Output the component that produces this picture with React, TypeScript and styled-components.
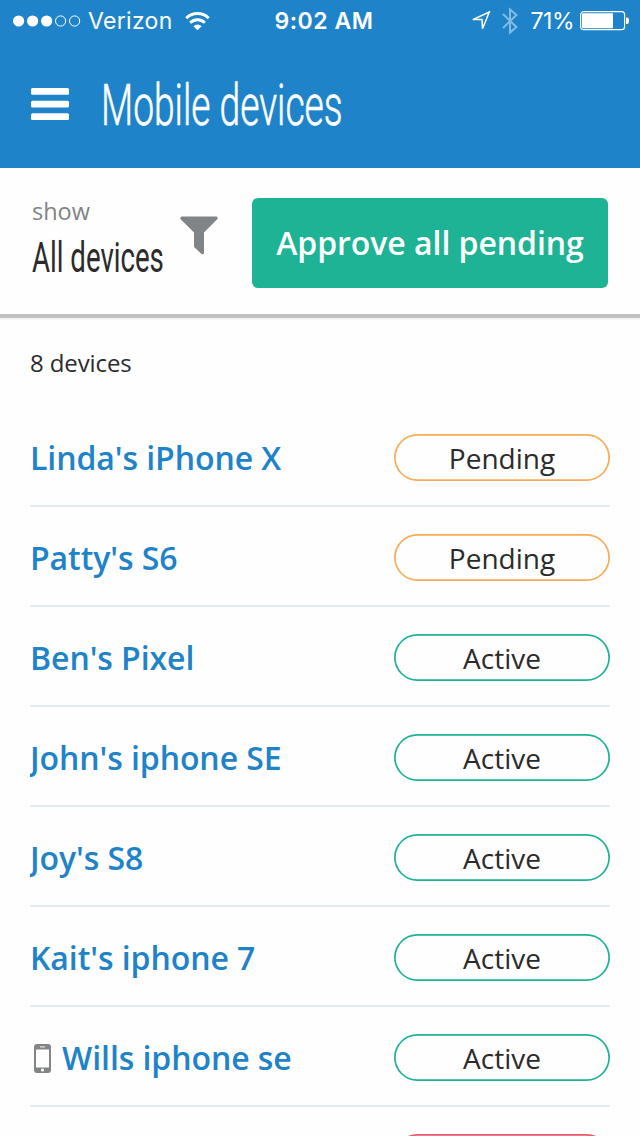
import React from "react";
import styled, { createGlobalStyle } from "styled-components";

const Global = createGlobalStyle`
  * { box-sizing: border-box; }
  html, body { margin: 0; background: #fefefe; }
  body { font-family: "Open Sans", sans-serif; color: #2b2b2c; overflow: hidden; }
`;

const Screen = styled.div`
  width: 640px;
  height: 1136px;
  overflow: hidden;
  background: #fefefe;
`;

const Top = styled.header`
  height: 168px;
  background: #1e83c8;
  color: #fff;
`;

const StatusBar = styled.div`
  height: 41px;
  display: grid;
  grid-template-columns: 1fr auto 1fr;
  align-items: center;
  padding: 0 11px 0 13px;
  font: 400 23px/41px Inter, sans-serif;
`;

const StatusGroup = styled.div<{ $end?: boolean }>`
  display: flex;
  align-items: center;
  justify-content: ${(p) => (p.$end ? "flex-end" : "flex-start")};
  svg { display: block; flex: none; }
`;

const Carrier = styled.span`
  margin: 0 12px 0 7px;
  letter-spacing: 0.3px;
`;

const Clock = styled.span`
  font-weight: 600;
  letter-spacing: 0.55px;
  padding: 1px 0 0 6px;
`;

const Percent = styled.span`
  margin: 0 6px 0 12px;
  padding-top: 1px;
  letter-spacing: -0.5px;
`;

const LocationSlot = styled.span`
  margin-right: 11px;
`;

const TitleBar = styled.div`
  display: flex;
  align-items: center;
  height: 127px;
  padding: 0 30px;
  gap: 31px;
`;

const MenuIcon = styled.svg`
  display: block;
  margin-bottom: 2px;
`;

const Condensed = styled.div<{ $size: number; $scale: number; $width: number }>`
  font-family: Roboto, sans-serif;
  font-weight: 400;
  font-size: ${(p) => p.$size}px;
  line-height: 1.2;
  width: ${(p) => p.$width}px;
  white-space: nowrap;
  transform: scaleX(${(p) => p.$scale});
  transform-origin: 0 50%;
`;

const PageTitle = styled(Condensed)`
  margin-top: 4px;
  font-weight: 300;
  -webkit-text-stroke: 0.6px #fff;
`;

const FilterValue = styled(Condensed)`
  margin-top: 8px;
`;

const Toolbar = styled.section`
  height: 150px;
  padding: 30px 32px 0;
  display: flex;
  align-items: flex-start;
  border-bottom: 4px solid #c1c1c1;
  box-shadow: 0 2px 0 #f4f4f4;
  margin-bottom: 2px;
`;

const Filter = styled.div`
  width: 148px;
`;

const FilterLabel = styled.div`
  font-size: 23.5px;
  line-height: 27px;
  color: #808487;
`;

const FunnelIcon = styled.svg`
  display: block;
  margin-top: 18px;
  flex: none;
`;

const Approve = styled.button`
  width: 356px;
  height: 90px;
  margin-left: auto;
  padding: 0;
  border: 0;
  border-radius: 6px;
  background: #1db394;
  color: #fff;
  font: 600 32px/90px "Open Sans", sans-serif;
  letter-spacing: -0.05px;
`;

const Main = styled.main`
  padding: 25px 30px 0;
`;

const Count = styled.div`
  height: 62px;
  font-size: 24px;
  line-height: 36px;
  letter-spacing: -0.1px;
`;

const Row = styled.div`
  height: 100px;
  display: flex;
  align-items: center;
  border-bottom: 2px solid #e4e9ed;
  padding-top: 3px;
`;

const Name = styled.a`
  flex: 1;
  display: flex;
  align-items: center;
  gap: 10px;
  overflow: hidden;
  font-weight: 600;
  font-size: 32px;
  line-height: 44px;
  letter-spacing: -0.07px;
  color: #1e83c8;
`;

const Pill = styled.span<{ $color: string }>`
  width: 216px;
  height: 47px;
  box-shadow: inset 0 0 0 1.7px ${(p) => p.$color};
  border-radius: 24px;
  text-align: center;
  font-size: 28px;
  line-height: 49px;
`;

const ORANGE = "#f8ac59";
const GREEN = "#1db394";
const RED = "#ed5565";

const devices = [
  { name: "Linda's iPhone X", status: "Pending", color: ORANGE },
  { name: "Patty's S6", status: "Pending", color: ORANGE },
  { name: "Ben's Pixel", status: "Active", color: GREEN },
  { name: "John's iphone SE", status: "Active", color: GREEN },
  { name: "Joy's S8", status: "Active", color: GREEN },
  { name: "Kait's iphone 7", status: "Active", color: GREEN },
  { name: "Wills iphone se", status: "Active", color: GREEN, phone: true },
  { name: "", status: "", color: RED },
];

const Signal = () => (
  <svg width="68" height="12" viewBox="0 0 68 12" fill="#fff">
    <circle cx="5.6" cy="6" r="5.6" />
    <circle cx="19.6" cy="6" r="5.6" />
    <circle cx="33.6" cy="6" r="5.6" />
    <circle cx="47.6" cy="6" r="5.1" fill="none" stroke="#fff" />
    <circle cx="61.6" cy="6" r="5.1" fill="none" stroke="#fff" />
  </svg>
);

const Wifi = () => (
  <svg width="25" height="19" viewBox="0 0 25 19" fill="none" stroke="#fff" strokeWidth="3">
    <path d="M1.3 6.2a15.8 15.8 0 0 1 22.4 0" />
    <path d="M5.1 10.7a10.5 10.5 0 0 1 14.8 0" />
    <path d="M12.5 18.3L8.4 14.2a5.8 5.8 0 0 1 8.2 0z" fill="#fff" stroke="none" />
  </svg>
);

const Location = () => (
  <svg width="21" height="21" viewBox="0 0 21 21" fill="none" stroke="#fff" strokeWidth="1.5">
    <path d="M19.300 1L2.800 8.600h9.200l.5 9.200z" />
  </svg>
);

const Bluetooth = () => (
  <svg width="17" height="28" viewBox="0 0 17 28" fill="none" stroke="#83bce3" strokeWidth="2">
    <path d="M1 7l13.4 13L8 25.6V2.4L14.4 8 1 21" />
  </svg>
);

const Battery = () => (
  <svg width="49" height="20" viewBox="0 0 49 20">
    <rect x=".6" y=".7" width="44" height="18" rx="3" fill="none" stroke="#fff" strokeWidth="1.2" />
    <rect x="2" y="2.2" width="31" height="15" rx="1" fill="#fff" />
    <path d="M46 6.5h1q2 0 2 3.2t-2 3.2h-1z" fill="#fff" />
  </svg>
);

const Phone = () => (
  <svg width="22" height="32" viewBox="0 0 22 32">
    <rect x="4" y="2" width="17" height="29" rx="3" fill="#828486" />
    <rect x="6" y="7.5" width="13" height="18" fill="#fefefe" />
    <rect x="10" y="4.1" width="5" height="1.5" fill="#d0d0d0" />
    <circle cx="12.5" cy="28" r="1.6" fill="#fefefe" />
  </svg>
);

export default function App() {
  return (
    <Screen>
      <Global />
      <Top>
        <StatusBar>
          <StatusGroup>
            <Signal />
            <Carrier>Verizon</Carrier>
            <Wifi />
          </StatusGroup>
          <Clock>9:02 AM</Clock>
          <StatusGroup $end>
            <LocationSlot><Location /></LocationSlot>
            <Bluetooth />
            <Percent>71%</Percent>
            <Battery />
          </StatusGroup>
        </StatusBar>
        <TitleBar>
          <MenuIcon width="40" height="34" viewBox="0 0 40 34" fill="#fff">
            <rect x="1" y="1" width="38" height="6.7" rx="1.5" />
            <rect x="1" y="13.7" width="38" height="6.7" rx="1.5" />
            <rect x="1" y="26.3" width="38" height="6.7" rx="1.5" />
          </MenuIcon>
          <PageTitle $size={57} $scale={0.652} $width={260}>Mobile devices</PageTitle>
        </TitleBar>
      </Top>
      <Toolbar>
        <Filter>
          <FilterLabel>show</FilterLabel>
          <FilterValue $size={42} $scale={0.658} $width={140}>All devices</FilterValue>
        </Filter>
        <FunnelIcon width="38" height="39" viewBox="0 0 38 39" fill="#808487">
          <path d="M1.5.5h35q2 1 .7 2.8L24 16.5V37q-.7 1.8-2.300 1L14.500 31.500q-.5-.6-.5-1.500V16.500L.6 3.300Q-.3 1.500 1.500.5z" />
        </FunnelIcon>
        <Approve>Approve all pending</Approve>
      </Toolbar>
      <Main>
        <Count>8 devices</Count>
        {devices.map((d, i) => (
          <Row key={i}>
            <Name>
              {d.phone && <Phone />}
              {d.name}
            </Name>
            <Pill $color={d.color}>{d.status}</Pill>
          </Row>
        ))}
      </Main>
    </Screen>
  );
}
